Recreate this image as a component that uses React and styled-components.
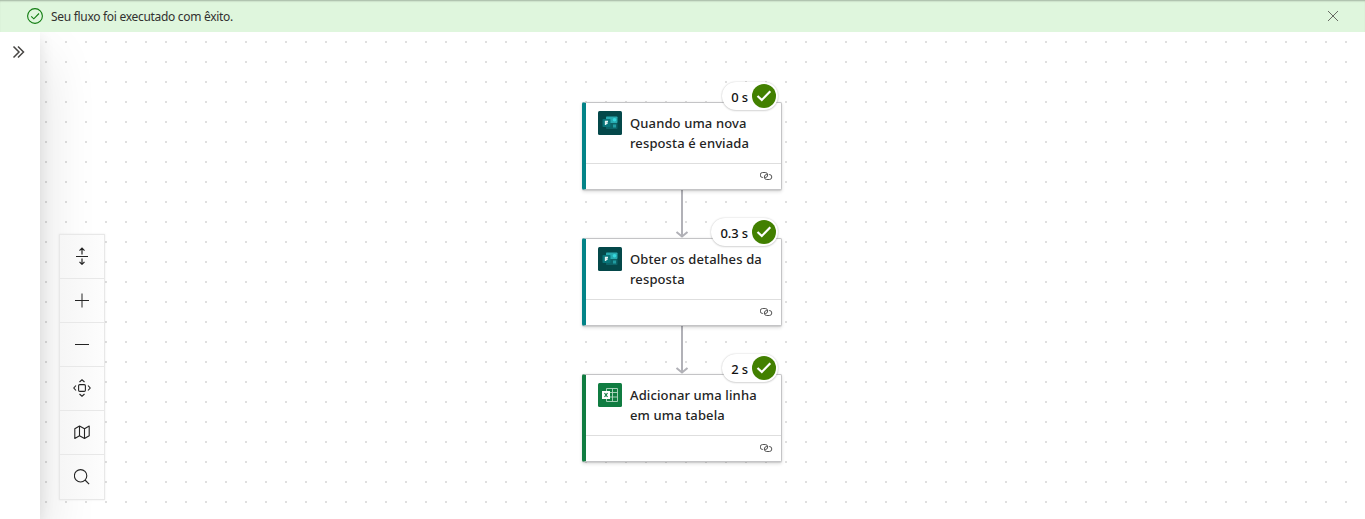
import React from "react";
import styled, { createGlobalStyle } from "styled-components";

const GlobalStyle = createGlobalStyle`
  *, *::before, *::after { box-sizing: border-box; }
  body {
    margin: 0;
    overflow: hidden;
    background: #fff;
    font-family: "Noto Sans", "Open Sans", sans-serif;
    color: #242424;
  }
`;

const Page = styled.div`
  display: flex;
  flex-direction: column;
  height: 100vh;
`;

const Banner = styled.header`
  display: flex;
  align-items: center;
  flex: none;
  height: 32px;
  padding: 0 26px 0 27px;
  background: #dff6dd;
  box-shadow: inset 0 2px 2px -1px rgba(0, 0, 0, 0.28);
  position: relative;
  z-index: 3;
`;

const BannerText = styled.span`
  flex: 1;
  margin-left: 8px;
  padding-top: 1px;
  font-size: 12px;
  line-height: 16px;
  letter-spacing: -0.3px;
  color: #323130;
  white-space: nowrap;
`;

const IconButton = styled.button`
  display: flex;
  align-items: center;
  justify-content: center;
  padding: 0;
  border: 0;
  background: none;
  color: #484644;
`;

const Body = styled.div`
  display: flex;
  flex: 1;
  min-height: 0;
`;

const SidePanel = styled.aside`
  flex: none;
  width: 40px;
  padding: 13px 0 0 12px;
  background: #fff;
  position: relative;
  z-index: 1;
  box-shadow: 0 25.6px 57.6px rgba(0, 0, 0, 0.14), 0 4.8px 14.4px rgba(0, 0, 0, 0.1);
`;

const Canvas = styled.main`
  position: relative;
  flex: 1;
  padding: 70px 0 0 542px;
  background-color: #fff;
  background-image: conic-gradient(from 270deg at 2px 2px, #dfdfdf 90deg, transparent 0);
  background-size: 20px 20px;
  background-position: 5px 9px;
`;

const Controls = styled.div`
  position: absolute;
  left: 59px;
  bottom: 19px;
  z-index: 2;
  display: flex;
  flex-direction: column;
  width: 46px;
  border: 1px solid #e8e8e8;
  background: linear-gradient(90deg, #f6f6f6, #fdfdfd);
  box-shadow: 0 0 2px rgba(0, 0, 0, 0.08);
`;

const ControlButton = styled(IconButton)`
  height: 44px;
  padding-bottom: 1px;
  border-bottom: 1px solid #e8e8e8;
  color: #242424;
  &:last-child { border-bottom: 0; }
`;

const Flow = styled.div`
  display: flex;
  flex-direction: column;
  width: 200px;
`;

const Card = styled.article`
  position: relative;
  display: flex;
  flex-direction: column;
  height: 88px;
  border: 1px solid #c4c4c6;
  border-left: 4px solid ${(p) => p.$accent};
  border-radius: 2px;
  background: #fff;
  box-shadow: 0 1.6px 3.6px rgba(0, 0, 0, 0.13), 0 0.3px 0.9px rgba(0, 0, 0, 0.1);
`;

const CardHeader = styled.div`
  display: flex;
  height: 61px;
  padding: 8px 0 0 12px;
  border-bottom: 1px solid #dedede;
`;

const CardTitle = styled.div`
  margin: 2px 0 0 8px;
  font-size: 13px;
  font-weight: 550;
  line-height: 20px;
  letter-spacing: 0.12px;
  white-space: pre;
`;

const CardFooter = styled.div`
  display: flex;
  flex: 1;
  align-items: center;
  justify-content: flex-end;
  padding: 0 8px 1px 0;
`;

const Status = styled.div`
  position: absolute;
  top: -21px;
  right: 3px;
  display: flex;
  align-items: center;
  height: 28px;
  padding: 0 2px 0 9px;
  border-radius: 14px;
  background: #fff;
  box-shadow: 0 0 2px rgba(0, 0, 0, 0.2), 0 1px 2px rgba(0, 0, 0, 0.12);
`;

const Duration = styled.span`
  margin-right: 4px;
  padding-top: 1px;
  font-size: 13px;
  font-weight: 550;
  line-height: 20px;
  letter-spacing: -0.1px;
  color: #111;
  white-space: nowrap;
`;

const ArrowIcon = styled.svg`
  display: block;
  width: 200px;
  height: 48px;
`;

function Line({ size = 16, width = 1, children, ...rest }) {
  return (
    <svg width={size} height={size} viewBox={`0 0 ${size} ${size}`} fill="none"
      stroke="currentColor" strokeWidth={width} {...rest}>
      {children}
    </svg>
  );
}

function FormsLogo() {
  return (
    <svg width="24" height="24" viewBox="0 0 24 24">
      <rect width="24" height="24" rx="1.5" fill="#04484a" />
      <rect x="8" y="5.5" width="11.5" height="6.5" rx="0.7" fill="#27a9af" />
      <circle cx="16.5" cy="8.7" r="1.8" fill="#36d8dc" />
      <rect x="8" y="12" width="11.5" height="6" rx="0.7" fill="#0c6468" />
      <rect x="15" y="13.5" width="3" height="3" fill="#219da2" />
      <rect x="4.5" y="8" width="8" height="8" rx="0.7" fill="#08757a" />
      <path d="M7.6 14V10.5H10M7.6 12.3H9.6" fill="none" stroke="#e4f3f3" strokeWidth="1.5" />
    </svg>
  );
}

function ExcelLogo() {
  return (
    <svg width="24" height="24" viewBox="0 0 24 24">
      <rect width="24" height="24" rx="1.5" fill="#107c41" />
      <path d="M8.5 5.5H19.5V18.5H8.5ZM14.5 5.5V18.5M8.5 9.5H19.5M8.5 14H19.5"
        fill="none" stroke="#b4d8c4" strokeWidth="0.9" />
      <rect x="4" y="8" width="8" height="8" fill="#fff" />
      <path d="M6.5 10L9.5 14M9.5 10L6.5 14" stroke="#107c41" strokeWidth="1.2" />
    </svg>
  );
}

function LinkIcon() {
  return (
    <svg width="13" height="10" viewBox="0.5 0 13 10" fill="none" stroke="#555" strokeWidth="1">
      <path d="M3.6 6.5H3.2A2.5 2.5 0 0 1 3.2 1.5H5.7A2.5 2.5 0 0 1 5.7 6.5H5.4" />
      <path d="M9.4 3.5H9.8A2.5 2.5 0 0 1 9.8 8.5H7.3A2.5 2.5 0 0 1 7.3 3.5H7.6" />
    </svg>
  );
}

function SuccessIcon() {
  return (
    <svg width="24" height="24" viewBox="0 0 24 24">
      <circle cx="12" cy="12" r="12" fill="#428000" />
      <path d="M5.5 12L9.8 16L18.3 7.3" fill="none" stroke="#fff" strokeWidth="2.2" />
    </svg>
  );
}

function Connector() {
  return (
    <ArrowIcon viewBox="0 0 200 48" fill="none" stroke="#b1b1b7" strokeWidth="2">
      <path d="M100 0V46" />
      <path d="M94.5 42L100 46.5L105.5 42" strokeLinejoin="round" />
    </ArrowIcon>
  );
}

function Step({ accent, logo, title, duration }) {
  return (
    <Card $accent={accent}>
      <CardHeader>
        {logo}
        <CardTitle>{title}</CardTitle>
      </CardHeader>
      <CardFooter><LinkIcon /></CardFooter>
      <Status>
        <Duration>{duration}</Duration>
        <SuccessIcon />
      </Status>
    </Card>
  );
}

export default function App() {
  return (
    <Page>
      <GlobalStyle />
      <Banner>
        <Line color="#107c10" width={1.1}>
          <circle cx="8" cy="8" r="7.4" />
          <path d="M4.2 8.3L6.8 10.8L12 5.5" />
        </Line>
        <BannerText>Seu fluxo foi executado com êxito.</BannerText>
        <IconButton aria-label="Fechar">
          <Line size={12} width={0.8}><path d="M1 1L11 11M11 1L1 11" /></Line>
        </IconButton>
      </Banner>
      <Body>
        <SidePanel>
          <IconButton aria-label="Expandir">
            <Line size={14} width={1.5}><path d="M1.5 1.5L7 7L1.5 12.5M6 1.5L11.5 7L6 12.5" /></Line>
          </IconButton>
        </SidePanel>
        <Canvas>
          <Flow>
            <Step accent="#038387" logo={<FormsLogo />} title={"Quando uma nova\nresposta é enviada"} duration="0 s" />
            <Connector />
            <Step accent="#038387" logo={<FormsLogo />} title={"Obter os detalhes da\nresposta"} duration="0.3 s" />
            <Connector />
            <Step accent="#107c41" logo={<ExcelLogo />} title={"Adicionar uma linha\nem uma tabela"} duration="2 s" />
          </Flow>
        </Canvas>
      </Body>
      <Controls>
        <ControlButton aria-label="Recolher">
          <Line size={18}>
            <path d="M3 9.5H15" />
            <path d="M9 7.5V1.5M6.5 3.7L9 1.2L11.5 3.7M9 11.5V17M6.5 14.8L9 17.3L11.5 14.8" strokeWidth="1.2" />
          </Line>
        </ControlButton>
        <ControlButton aria-label="Ampliar">
          <Line><path d="M1 8.5H15M8 1.5V15.5" /></Line>
        </ControlButton>
        <ControlButton aria-label="Reduzir">
          <Line><path d="M1 8.5H15" /></Line>
        </ControlButton>
        <ControlButton aria-label="Ajustar">
          <Line size={18} width={1.1}>
            <rect x="5.6" y="5.6" width="6.8" height="6.8" rx="1.2" />
            <path d="M6.5 3L9 0.8L11.5 3M6.5 15L9 17.2L11.5 15M3 6.5L0.8 9L3 11.5M15 6.5L17.2 9L15 11.5" />
          </Line>
        </ControlButton>
        <ControlButton aria-label="Minimapa">
          <Line width={1.1}>
            <path d="M0.8 4.7L5.5 2L10.5 4.7L15.2 2V11.7L10.5 14.4L5.5 11.7L0.8 14.4ZM5.5 2V11.7M10.5 4.7V14.4" strokeLinejoin="round" />
          </Line>
        </ControlButton>
        <ControlButton aria-label="Pesquisar">
          <Line width={1.1}><circle cx="6.6" cy="6.8" r="6.2" /><path d="M11 11L15.1 15.1" /></Line>
        </ControlButton>
      </Controls>
    </Page>
  );
}
